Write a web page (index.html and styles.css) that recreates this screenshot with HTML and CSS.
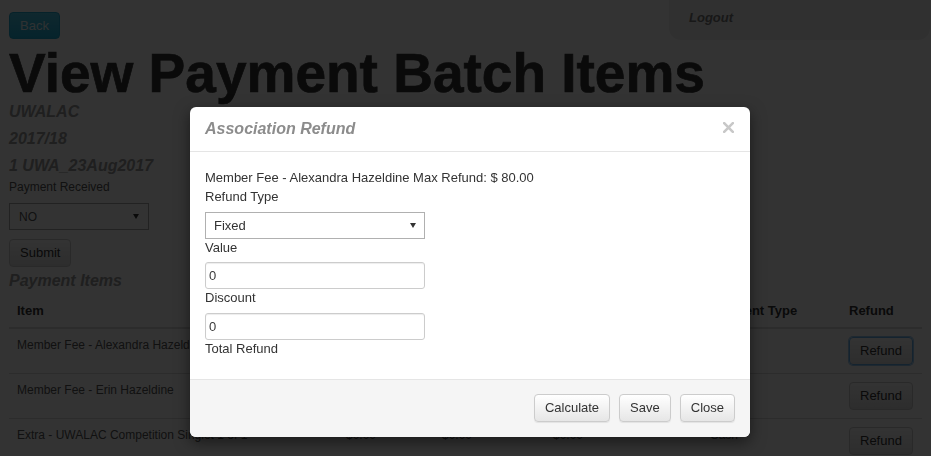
FILE: index.html
```html
<!DOCTYPE html>
<html lang="en">
<head>
<meta charset="utf-8">
<title>View Payment Batch Items</title>
<link rel="stylesheet" href="styles.css">
</head>
<body>
<div class="page">
  <div class="topbar">
    <button class="btn btn-info">Back</button>
    <div class="userbox"><span class="logout">Logout</span></div>
  </div>
  <h1 class="title">View Payment Batch Items</h1>
  <h3 class="sub">UWALAC</h3>
  <h3 class="sub gap">2017/18</h3>
  <h3 class="sub gap">1 UWA_23Aug2017</h3>
  <div class="page-label">Payment Received</div>
  <div class="page-select">
    <span>NO</span>
    <svg class="arrow" width="6" height="5" viewBox="0 0 6 5"><polygon points="0,0 6,0 3,5" fill="#333"/></svg>
  </div>
  <button class="btn btn-default submit">Submit</button>
  <h3 class="sub items-title">Payment Items</h3>
  <table class="items">
    <thead>
      <tr>
        <th class="c1">Item</th>
        <th class="c2">Amount</th>
        <th class="c3">Paid</th>
        <th class="c4">Refunded</th>
        <th class="c5">Payment Type</th>
        <th class="c6">Refund</th>
      </tr>
    </thead>
    <tbody>
      <tr>
        <td>Member Fee - Alexandra Hazeldine</td>
        <td>$80.00</td>
        <td>$80.00</td>
        <td>$0.00</td>
        <td>Cash</td>
        <td><button class="btn btn-default focus">Refund</button></td>
      </tr>
      <tr>
        <td>Member Fee - Erin Hazeldine</td>
        <td>$80.00</td>
        <td>$80.00</td>
        <td>$0.00</td>
        <td>Cash</td>
        <td><button class="btn btn-default">Refund</button></td>
      </tr>
      <tr>
        <td>Extra - UWALAC Competition Singlet 1 of 1</td>
        <td>$0.00</td>
        <td>$0.00</td>
        <td>$0.00</td>
        <td>Cash</td>
        <td><button class="btn btn-default">Refund</button></td>
      </tr>
    </tbody>
  </table>
</div>

<div class="backdrop"></div>

<div class="modal">
  <div class="modal-header">
    <h4 class="modal-title">Association Refund</h4>
    <svg class="close" width="11" height="11" viewBox="0 0 11 11"><path d="M1.2 1.2 L9.8 9.8 M9.8 1.2 L1.2 9.8" stroke="#c8c8c8" stroke-width="2.6" stroke-linecap="square" fill="none"/></svg>
  </div>
  <div class="modal-body">
    <div class="info">Member Fee - Alexandra Hazeldine Max Refund: $ 80.00</div>
    <div class="field-label">Refund Type</div>
    <div class="select-wrap">
      <select class="m-select"><option>Fixed</option><option>Percentage</option></select>
      <svg class="m-arrow" width="6" height="5" viewBox="0 0 6 5"><polygon points="0,0 6,0 3,5" fill="#333"/></svg>
    </div>
    <div class="field-label">Value</div>
    <input class="m-input" type="text" value="0">
    <div class="field-label">Discount</div>
    <input class="m-input" type="text" value="0">
    <div class="field-label">Total Refund</div>
  </div>
  <div class="modal-footer">
    <button class="btn btn-light">Calculate</button>
    <button class="btn btn-light">Save</button>
    <button class="btn btn-light">Close</button>
  </div>
</div>
</body>
</html>
```

FILE: styles.css
```css
* { box-sizing: border-box; }

html, body {
  margin: 0;
  padding: 0;
  background: #ffffff;
  font-family: "Liberation Sans", Arial, sans-serif;
  color: #333;
  overflow: hidden;
}

button, input, select {
  font-family: "Liberation Sans", Arial, sans-serif;
}

.page {
  padding: 0 9px;
}

.topbar {
  display: flex;
  justify-content: space-between;
  align-items: flex-start;
  height: 40px;
}

.btn {
  display: inline-flex;
  align-items: center;
  justify-content: center;
  height: 28px;
  padding: 0 10px;
  font-size: 13px;
  line-height: 18px;
  border-radius: 4px;
  border: 1px solid #ccc;
  color: #333;
  cursor: pointer;
}

.btn-info {
  margin-top: 12px;
  height: 27px;
  color: #e8f6fa;
  background: linear-gradient(#4cc6e6, #1fb0d8);
  border-color: #22a8cf;
}

.btn-default {
  background: linear-gradient(#ffffff, #e0e0e0);
  border-color: #ccc;
}

.btn-default.focus {
  border-color: #66afe9;
  box-shadow: 0 0 0 1px rgba(102, 175, 233, 0.7);
}

.userbox {
  width: 261px;
  height: 40px;
  margin-right: -8px;
  background: #f0f0f0;
  border-radius: 0 0 12px 12px;
  padding: 8px 20px 0;
}

.logout {
  font-size: 13px;
  line-height: 18px;
  font-weight: bold;
  font-style: italic;
  color: #777;
}

.title {
  margin: 4px 0 0;
  font-size: 55px;
  line-height: 58px;
  font-weight: bold;
  color: #333;
  white-space: nowrap;
  -webkit-text-stroke: 0.7px #333;
}

.sub {
  margin: 0;
  font-size: 16px;
  line-height: 20px;
  font-weight: bold;
  font-style: italic;
  color: #999;
}

.sub.gap { margin-top: 7px; }

.page-label {
  margin-top: 3px;
  font-size: 12px;
  line-height: 17px;
  color: #555;
}

.page-select {
  margin-top: 7px;
  width: 140px;
  height: 27px;
  border: 1px solid #aaa;
  background: #fff;
  display: flex;
  align-items: center;
  justify-content: space-between;
  padding: 0 9px;
  font-size: 12px;
  color: #555;
}

.submit {
  margin-top: 9px;
  display: flex;
}

.items-title {
  margin-top: 4px;
}

.items {
  margin-top: 3px;
  width: 913px;
  table-layout: fixed;
  border-collapse: separate;
  border-spacing: 0;
}

.items th {
  text-align: left;
  padding: 8px 8px 7px;
  font-size: 13px;
  line-height: 18px;
  font-weight: bold;
  color: #333;
  border-bottom: 2px solid #ddd;
  white-space: nowrap;
}

.items .c1 { width: 329px; }
.items .c2 { width: 96px; }
.items .c3 { width: 111px; }
.items .c4 { width: 157px; }
.items .c5 { width: 139px; }
.items .c6 { width: 81px; }

.items td {
  padding: 8px;
  font-size: 12px;
  line-height: 17px;
  vertical-align: top;
  color: #555;
  border-bottom: 1px solid #ddd;
  white-space: nowrap;
}

.backdrop {
  position: fixed;
  inset: 0;
  background: rgba(0, 0, 0, 0.8);
}

.modal {
  position: fixed;
  top: 107px;
  left: 190px;
  width: 560px;
  background: #fff;
  border-radius: 6px;
  overflow: hidden;
  box-shadow: 0 5px 15px rgba(0, 0, 0, 0.5);
}

.modal-header {
  display: flex;
  justify-content: space-between;
  align-items: center;
  padding: 12px 16px 12px 15px;
  border-bottom: 1px solid #e5e5e5;
}

.modal-title {
  margin: 0;
  font-size: 16px;
  line-height: 20px;
  font-weight: bold;
  font-style: italic;
  color: #8c8c8c;
}

.close {
  display: block;
  margin-top: -3px;
}

.modal-body {
  padding: 16px 15px 21px;
  font-size: 13px;
  color: #333;
}

.info {
  line-height: 20px;
}

.field-label {
  line-height: 18.5px;
}

.select-wrap {
  position: relative;
  width: 220px;
  height: 27px;
  margin-top: 5px;
}

.m-select {
  -webkit-appearance: none;
  appearance: none;
  display: block;
  width: 220px;
  height: 27px;
  border: 1px solid #b0b0b0;
  border-radius: 0;
  background: #fff;
  padding: 0 8px;
  font-size: 13px;
  color: #333;
  outline: none;
}

.m-arrow {
  position: absolute;
  right: 9px;
  top: 11px;
}

.m-input {
  display: block;
  width: 220px;
  height: 27px;
  margin: 5px 0 0;
  border: 1px solid #ccc;
  border-radius: 3px;
  padding: 0 3px;
  font-size: 13px;
  color: #3a3a3a;
  box-shadow: inset 0 1px 1px rgba(0, 0, 0, 0.075);
  outline: none;
}

.modal-footer {
  display: flex;
  justify-content: flex-end;
  gap: 9px;
  padding: 14px 15px 15px;
  background: #f5f5f5;
  border-top: 1px solid #e5e5e5;
}

.btn-light {
  background: linear-gradient(#ffffff, #e6e6e6);
  border-color: #ccc;
  box-shadow: inset 0 1px 0 rgba(255, 255, 255, 0.15), 0 1px 1px rgba(0, 0, 0, 0.075);
}
```
